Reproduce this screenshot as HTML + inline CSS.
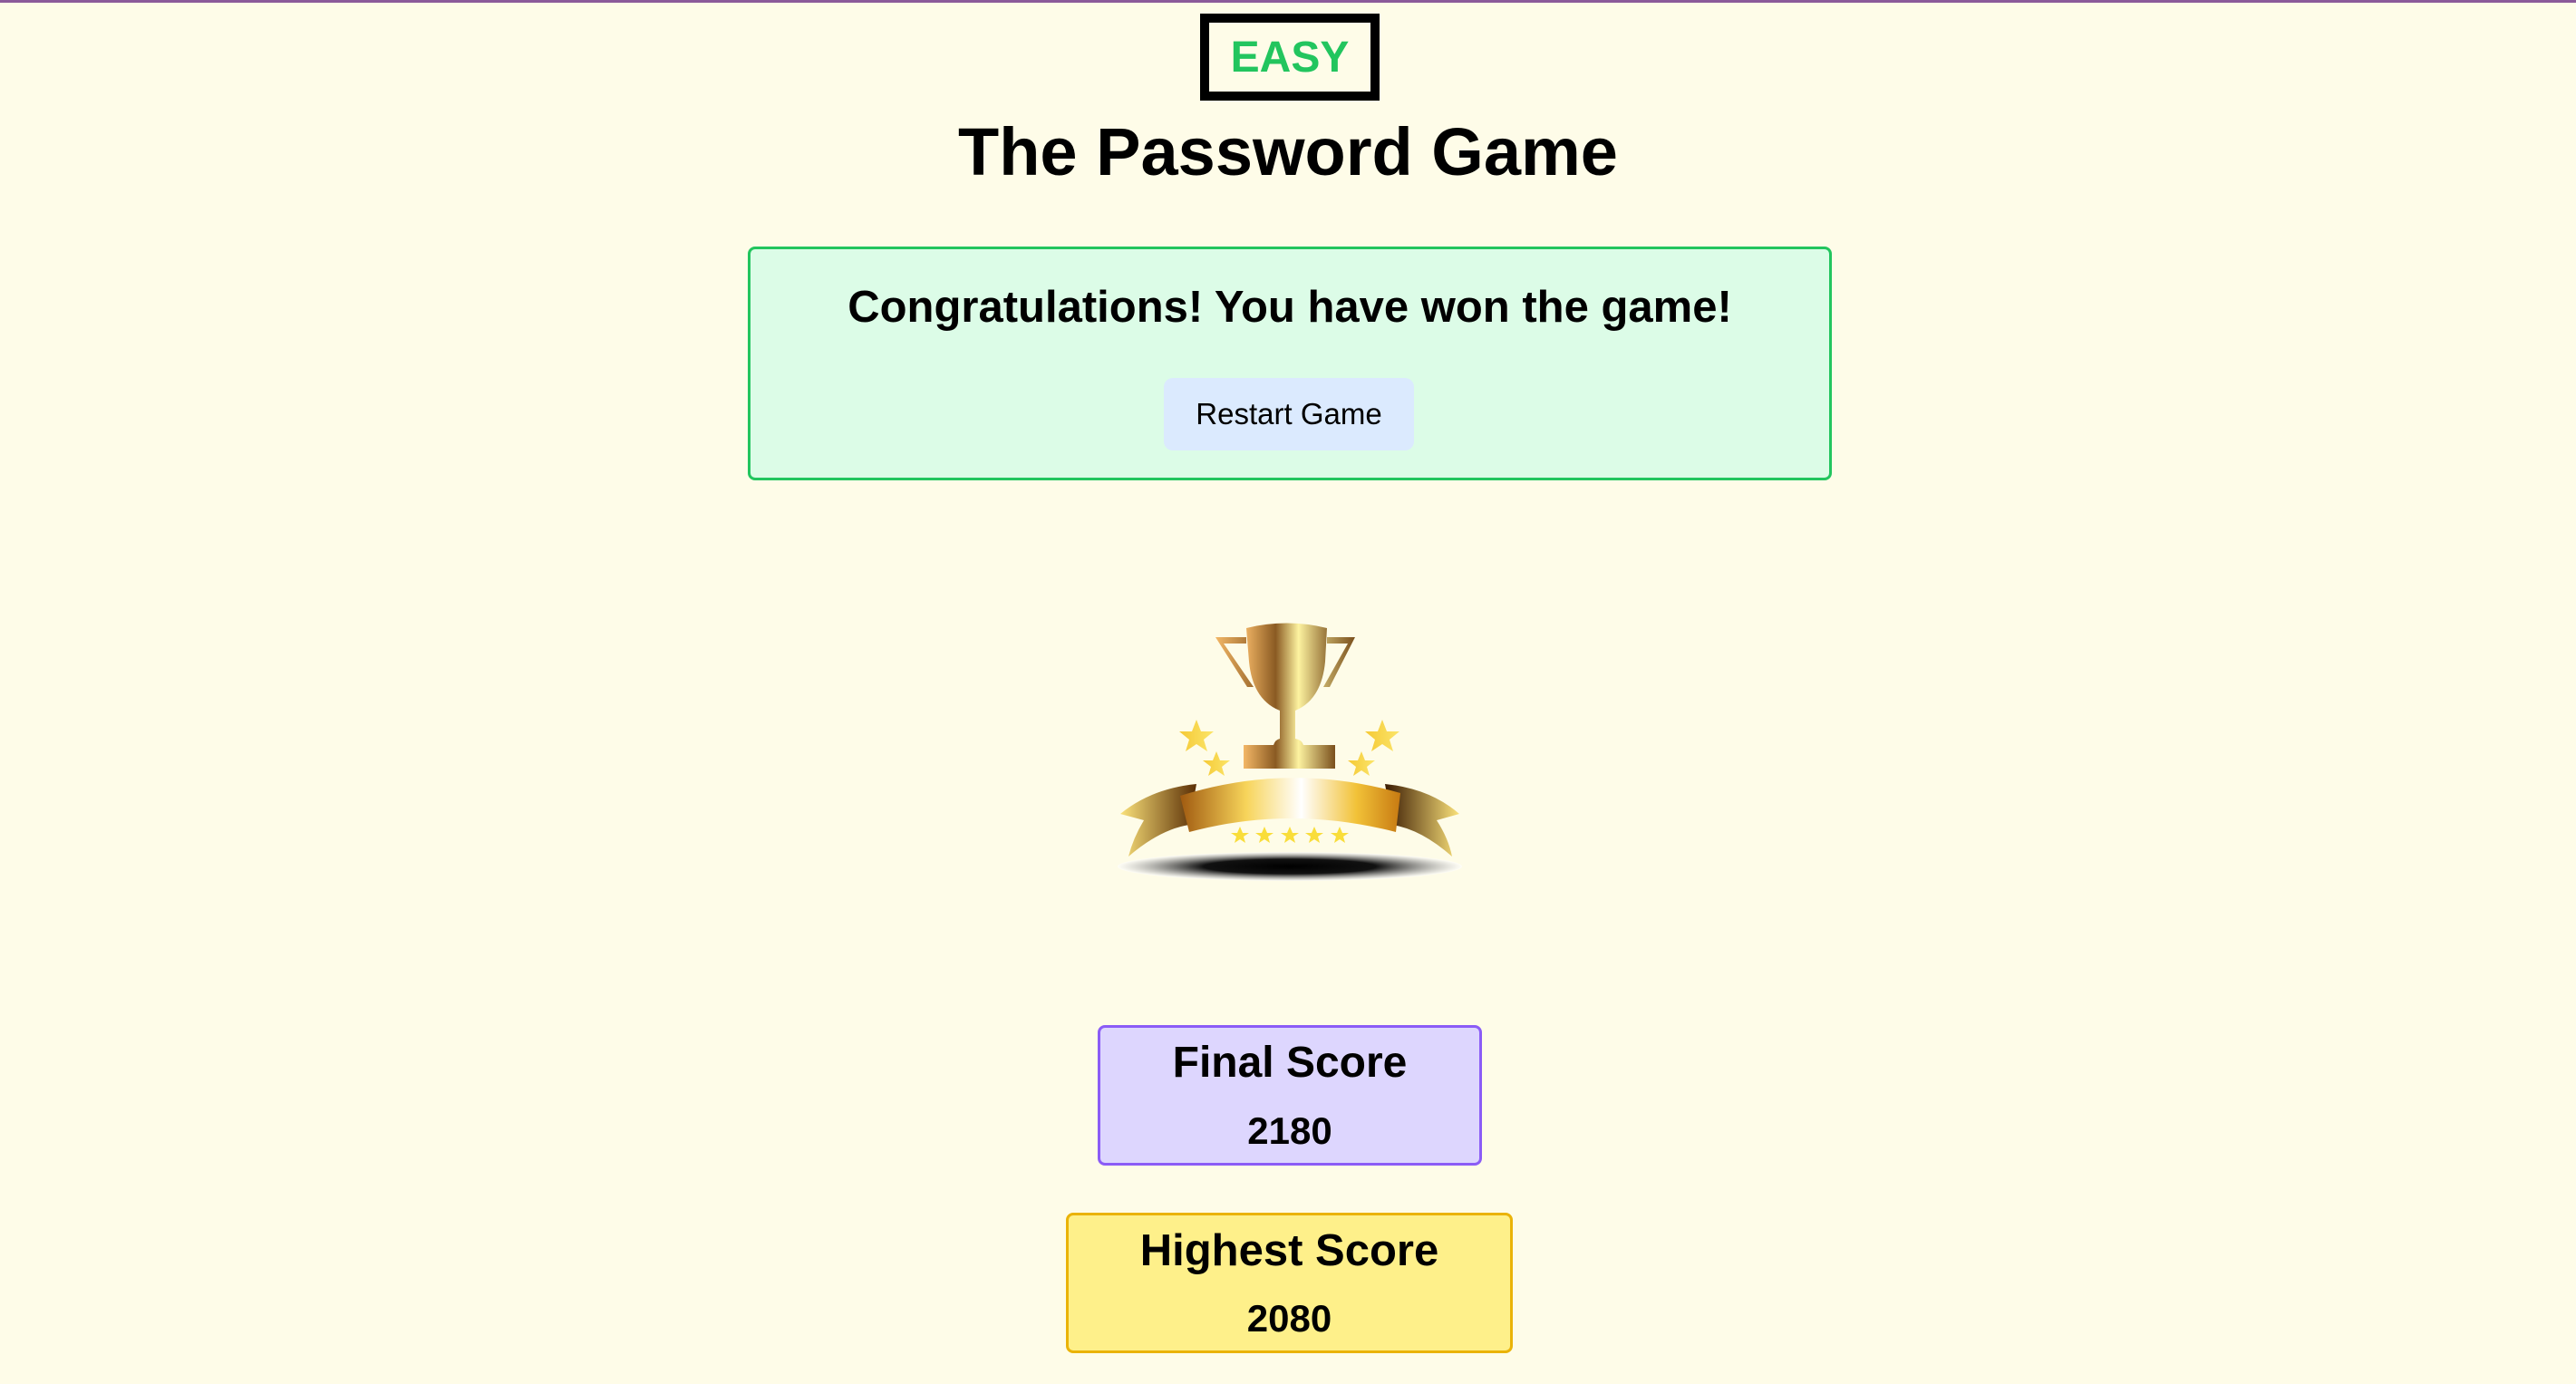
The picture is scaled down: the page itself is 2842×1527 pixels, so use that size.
<!DOCTYPE html>
<html><head><meta charset="utf-8"><style>
html,body{margin:0;padding:0;}
body{width:2842px;height:1527px;background:#fefce8;position:relative;overflow:hidden;font-family:"Liberation Sans",sans-serif;color:#000;}
.topline{position:absolute;left:0;top:0;width:2842px;height:3px;background:#8b5a9a;}
.abs{position:absolute;box-sizing:border-box;}
.easy{left:1324px;top:15px;width:198px;height:96px;border:10px solid #000;display:flex;align-items:center;justify-content:center;color:#22c55e;font-weight:bold;font-size:48px;}
.title{left:0;width:2842px;top:118px;text-align:center;font-weight:bold;font-size:74px;line-height:100px;}
.win{left:825px;top:272px;width:1196px;height:258px;background:#dcfce7;border:3px solid #22c55e;border-radius:8px;}
.congrats{left:0;width:100%;top:34px;text-align:center;font-weight:bold;font-size:49px;line-height:60px;}
.btn{left:456px;top:142px;width:276px;height:80px;background:#dbeafe;border-radius:10px;display:flex;align-items:center;justify-content:center;font-size:33px;font-weight:500;}
.score{display:flex;flex-direction:column;align-items:center;border-radius:8px;}
.score .h{font-weight:bold;font-size:48px;line-height:60px;margin-top:9px;}
.score .v{font-weight:bold;font-size:42px;line-height:50px;margin-top:20px;}
</style></head><body>
<div class="topline"></div>
<div class="abs easy">EASY</div>
<div class="abs title">The Password Game</div>
<div class="abs win">
  <div class="abs congrats">Congratulations! You have won the game!</div>
  <div class="abs btn">Restart Game</div>
</div>
<svg class="abs" style="left:1200px;top:660px" width="440" height="320" viewBox="0 0 440 320">
<defs>
<linearGradient id="g1" x1="0" x2="1" y1="0" y2="0">
<stop offset="0" stop-color="#f3b766"/><stop offset="0.35" stop-color="#8a5a22"/><stop offset="0.6" stop-color="#fdf3a0"/><stop offset="1" stop-color="#7a4f1c"/></linearGradient>
<linearGradient id="g2" x1="0" x2="1"><stop offset="0" stop-color="#a05a10"/><stop offset="0.3" stop-color="#f7d45a"/><stop offset="0.55" stop-color="#ffffff"/><stop offset="0.8" stop-color="#f2c238"/><stop offset="1" stop-color="#c77a12"/></linearGradient>
<linearGradient id="g3" x1="0" x2="1"><stop offset="0" stop-color="#fbe27a"/><stop offset="1" stop-color="#5a2e05"/></linearGradient>
<linearGradient id="g4" x1="1" x2="0"><stop offset="0" stop-color="#fbe27a"/><stop offset="1" stop-color="#3a1a02"/></linearGradient>
<radialGradient id="sh" cx="0.5" cy="0.5" r="0.5"><stop offset="0" stop-color="#000"/><stop offset="0.5" stop-color="#111"/><stop offset="1" stop-color="#fff" stop-opacity="0.6"/></radialGradient>
<linearGradient id="gs" x1="0" x2="1"><stop offset="0" stop-color="#f5c935"/><stop offset="1" stop-color="#fbe56a"/></linearGradient>
</defs>
<path d="M141 43 H175 V50 H150 L183 98 H176 Z M295 43 H264 V50 H287 L260 98 H267 Z" fill="url(#g1)"/>
<path d="M175 33 Q220 22 264 33 L262 70 Q258 112 229 124 V155 Q236 156 238 162 H273 V188 H172 V162 H205 Q207 156 212 155 V124 Q182 112 178 70 Z" fill="url(#g1)"/>
<g fill="url(#gs)">
<polygon points="120,134 125,147 139,147 128,156 132,169 120,161 108,169 112,156 101,147 115,147"/>
<polygon points="142,169 146,179 157,179 148,186 151,196 142,190 133,196 136,186 127,179 138,179"/>
<polygon points="325,134 330,147 344,147 333,156 337,169 325,161 313,169 317,156 306,147 320,147"/>
<polygon points="302,169 306,179 317,179 308,186 311,196 302,190 293,196 296,186 287,179 298,179"/>
</g>
<path d="M120 205 Q70 210 36 238 L62 245 Q50 265 45 285 Q80 255 112 250 Z" fill="url(#g3)"/>
<path d="M328 205 Q378 210 410 238 L385 245 Q398 265 402 285 Q368 255 336 250 Z" fill="url(#g4)"/>
<path d="M102 218 Q223 180 345 215 L340 258 Q223 228 112 258 Z" fill="url(#g2)"/>
<g fill="#f9dd3a">
<polygon points="168,252 171,259 178,259 172,263 174,270 168,266 162,270 164,263 158,259 165,259"/>
<polygon points="195,252 198,259 205,259 199,263 201,270 195,266 189,270 191,263 185,259 192,259"/>
<polygon points="223,252 226,259 233,259 227,263 229,270 223,266 217,270 219,263 213,259 220,259"/>
<polygon points="250,252 253,259 260,259 254,263 256,270 250,266 244,270 246,263 240,259 247,259"/>
<polygon points="278,252 281,259 288,259 282,263 284,270 278,266 272,270 274,263 268,259 275,259"/>
</g>
<ellipse cx="223" cy="296" rx="190" ry="16" fill="url(#sh)"/>
</svg>
<div class="abs score" style="left:1211px;top:1131px;width:424px;height:155px;background:#ddd6fe;border:3px solid #8b5cf6;">
  <div class="h">Final Score</div><div class="v">2180</div>
</div>
<div class="abs score" style="left:1176px;top:1338px;width:493px;height:155px;background:#fef08a;border:3px solid #eab308;">
  <div class="h" style="font-size:49px">Highest Score</div><div class="v">2080</div>
</div>
</body></html>
